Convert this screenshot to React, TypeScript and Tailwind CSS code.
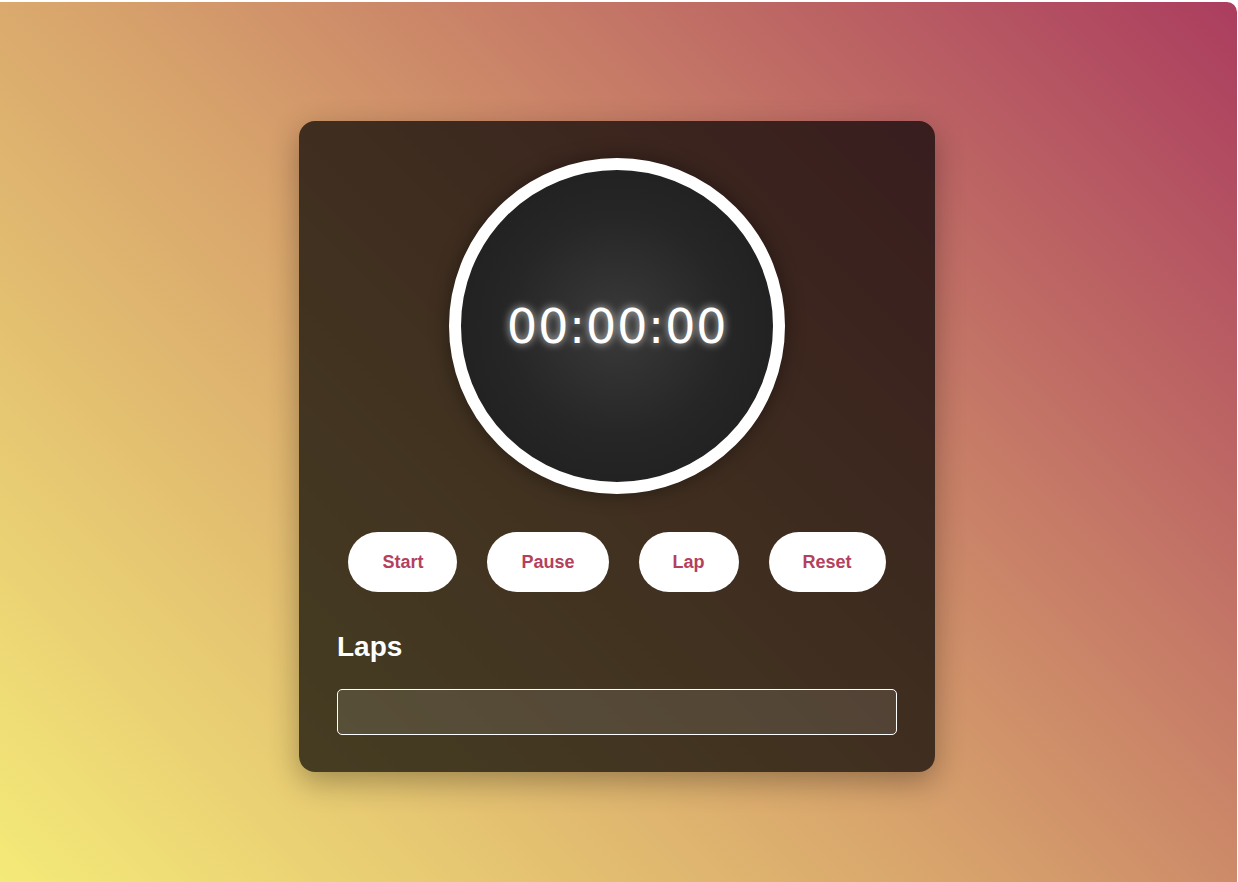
import React from "react";

export default function App() {
  const buttons = ["Start", "Pause", "Lap", "Reset"];
  return (
    <div className="w-[1238px] h-[882px] bg-white overflow-hidden">
      <div className="mt-[2px] mr-[1px] h-[880px] rounded-tr-[10px] bg-[linear-gradient(45deg,#f4ea78_0%,#d8a46c_45%,#ab3d5f_100%)] flex justify-center pt-[119px] pr-[3px]">
        <div className="w-[636px] h-[651px] rounded-[16px] bg-black/70 shadow-[0_10px_30px_rgba(0,0,0,0.3)] px-[38px] pt-[37px] flex flex-col items-center">
          <div className="w-[336px] h-[336px] rounded-full border-[12px] border-white bg-[radial-gradient(circle,#3a3a3a_0%,#262626_50%,#1c1c1c_100%)] shadow-[0_0_20px_rgba(0,0,0,0.4)] flex items-center justify-center">
            <span className="text-white text-[48px] leading-none tracking-[0.6px] font-['DejaVu_Sans',sans-serif] [text-shadow:0_0_8px_rgba(255,255,255,0.8)]">
              00:00:00
            </span>
          </div>
          <div className="mt-[38px] flex gap-[30px]">
            {buttons.map((b) => (
              <button
                key={b}
                className="h-[60px] px-[34px] rounded-full bg-white text-[#b4405e] text-[18px] font-bold font-['Liberation_Sans',Arial,sans-serif]"
              >
                {b}
              </button>
            ))}
          </div>
          <div className="w-full mt-[39px]">
            <h2 className="text-white text-[28px] leading-[32px] font-bold font-['Liberation_Sans',Arial,sans-serif]">
              Laps
            </h2>
            <div className="mt-[26px] h-[46px] w-full rounded-[5px] border border-white bg-white/10"></div>
          </div>
        </div>
      </div>
    </div>
  );
}
